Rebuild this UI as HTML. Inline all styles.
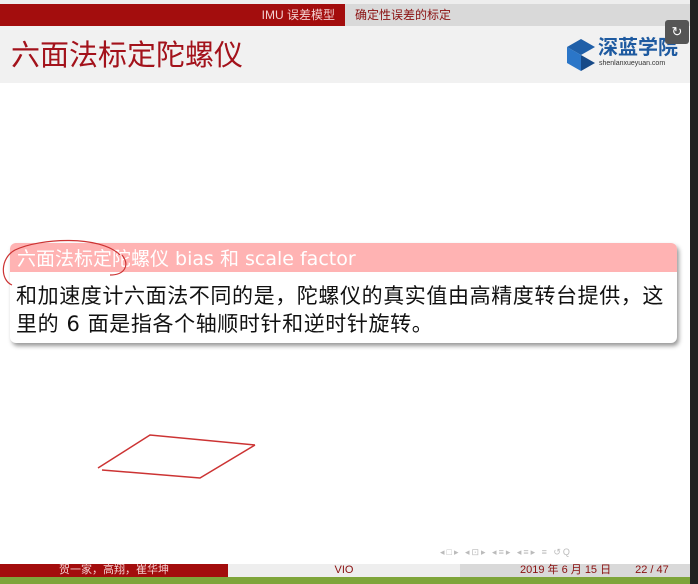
<html><head><style>
body{margin:0;width:698px;height:584px;overflow:hidden;background:#fff;font-family:"Liberation Sans","Noto Sans CJK SC",sans-serif;position:relative}
div{position:absolute}
</style></head><body>
<div style="left:0;top:0;width:698px;height:4px;background:#eee"></div>
<div style="left:0;top:4px;width:345px;height:22px;background:#a30d0d;color:#f3d0d0;font-size:12px;line-height:22px;text-align:right;box-sizing:border-box;padding-right:10px">IMU 误差模型</div>
<div style="left:345px;top:4px;width:345px;height:22px;background:#d9d9d9;color:#8a1010;font-size:12px;line-height:22px;padding-left:10px;box-sizing:border-box">确定性误差的标定</div>
<div style="left:0;top:26px;width:690px;height:57px;background:#f1f1f1"></div>
<div style="left:11px;top:38px;color:#a3121b;font-size:29px;line-height:36px">六面法标定陀螺仪</div>
<svg style="position:absolute;left:566px;top:38px" width="30" height="34" viewBox="0 0 30 34"><path d="M15 1 L29 9 L15 17 L1 9Z" fill="#1f5fa8"/><path d="M1 9 L15 17 L15 33 L1 25Z" fill="#2b76c8"/><path d="M15 17 L29 25 L15 33Z" fill="#174a88"/></svg>
<div style="left:598px;top:37px;color:#1e5aa0;font-size:20px;font-weight:bold;line-height:22px">深蓝学院</div>
<div style="left:599px;top:60px;color:#333;font-size:7px">shenlanxueyuan.com</div>
<div style="left:665px;top:20px;width:24px;height:24px;background:#555;border-radius:3px;color:#fff;font-size:13px;text-align:center;line-height:24px">↻</div>
<div style="left:690px;top:0;width:8px;height:584px;background:#222"></div>
<div style="left:10px;top:243px;width:667px;height:100px;background:#fff;border-radius:6px;box-shadow:2px 3px 4px #999"></div>
<div style="left:10px;top:243px;width:667px;height:29px;background:#ffb3b3;border-radius:6px 6px 0 0;color:#fff;font-size:19px;line-height:33px;padding-left:7px;box-sizing:border-box;font-family:'DejaVu Sans','Noto Sans CJK SC',sans-serif">六面法标定陀螺仪 bias 和 scale factor</div>
<div style="left:16px;top:282px;width:670px;color:#111;font-size:21px;line-height:28px;letter-spacing:0.6px;font-family:'DejaVu Sans','Noto Sans CJK SC',sans-serif;white-space:nowrap">和加速度计六面法不同的是，陀螺仪的真实值由高精度转台提供，这<br>里的 6 面是指各个轴顺时针和逆时针旋转。</div>
<svg style="position:absolute;left:0;top:230px" width="698" height="260"><path d="M120 25 C100 5 40 8 15 20 C0 28 0 50 12 55 M122 25 C130 35 125 45 110 45" stroke="#c33" fill="none" stroke-width="1.2"/><path d="M98 238 L150 205 L255 215 M255 215 L200 248 L102 240" stroke="#c33" fill="none" stroke-width="1.5"/></svg>
<div style="left:440px;top:547px;color:#bbb;font-size:9px;letter-spacing:2px">◂□▸ ◂⊡▸ ◂≡▸ ◂≡▸ ≡ ↺Q</div>
<div style="left:0;top:564px;width:228px;height:13px;background:#a30d0d;color:#f3d0d0;font-size:11px;line-height:13px;text-align:center">贺一家，高翔，崔华坤</div>
<div style="left:228px;top:564px;width:232px;height:13px;background:#eee;color:#8a1010;font-size:11px;line-height:13px;text-align:center">VIO</div>
<div style="left:460px;top:564px;width:230px;height:13px;background:#d9d9d9;color:#8a1010;font-size:11px;line-height:13px"><span style="margin-left:60px">2019 年 6 月 15 日</span><span style="margin-left:24px">22 / 47</span></div>
<div style="left:0;top:577px;width:690px;height:7px;background:#7ea53a"></div>
</body></html>
